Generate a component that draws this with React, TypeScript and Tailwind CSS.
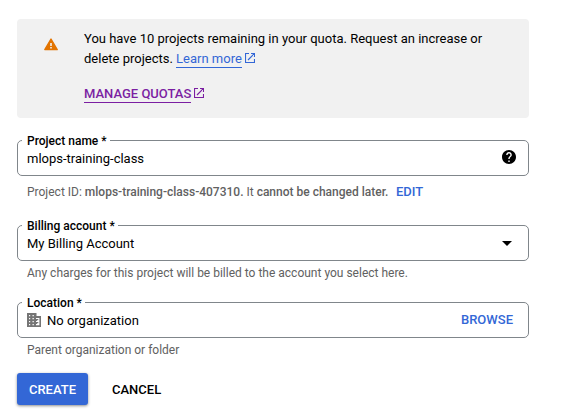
import type { ReactNode } from 'react';

function WarningIcon() {
  return (
    <svg viewBox="0 0 14 13" className="mt-[9px] h-[13px] w-[14px] shrink-0" aria-hidden="true">
      <path d="M7 1 13.2 11.6H.8z" fill="#e37400" stroke="#e37400" strokeWidth="1.4" strokeLinejoin="round" />
      <path d="M6.2 5h1.6v3H6.2zM6.2 9h1.6v1.4H6.2z" fill="#f1f1f1" />
    </svg>
  );
}

function HelpIcon() {
  return (
    <svg viewBox="2 2 20 20" className="mr-[12px] mb-[2px] ml-auto h-[14px] w-[14px] shrink-0" aria-hidden="true">
      <path d="M12 2C6.48 2 2 6.48 2 12s4.48 10 10 10 10-4.48 10-10S17.52 2 12 2zm1 17h-2v-2h2v2zm2.07-7.75l-.9.92C13.45 12.9 13 13.5 13 15h-2v-.5c0-1.1.45-2.1 1.17-2.83l1.24-1.26c.37-.36.59-.86.59-1.41 0-1.1-.9-2-2-2s-2 .9-2 2H8c0-2.21 1.79-4 4-4s4 1.79 4 4c0 .88-.36 1.68-.93 2.25z" />
    </svg>
  );
}

function OpenIcon() {
  return (
    <svg viewBox="0 0 10 10" fill="none" stroke="currentColor" strokeWidth="1.15" className="mb-px ml-[3px] h-[10px] w-[10px] shrink-0" aria-hidden="true">
      <path d="M4 .5H.5v9h9V6M6 .5h3.5V4M9.3.7 3 7" />
    </svg>
  );
}

function BuildingIcon() {
  return (
    <svg viewBox="0 0 14 14" fill="#757575" fillRule="evenodd" className="h-[14px] w-[14px] shrink-0" aria-hidden="true">
      <path d="M0 0h9.5v3H14v11H0zM2 2v1.2h1.2V2zM5.5 2v1.2h1.3V2zM2 5v1.2h1.2V5zM5.5 5v1.2h1.3V5zM2 8v1.2h1.2V8zM5.5 8v1.2h1.3V8zM2 11v1.2h1.2V11zM5.5 11v1.2h1.3V11zM9 5v1h1v2H9v1h1v2H9v1.2h3.4V5z" />
      <path d="M10 6h1.3v1.3H10zM10 9h1.3v1.3H10z" />
    </svg>
  );
}

function Field({ label, children }: { label: string; children: ReactNode }) {
  return (
    <fieldset className="h-[42px] min-w-0 rounded-[5px] border border-[#80868b] pl-1">
      <legend className="h-[13px] pr-[3px] pl-[5px] text-[12px] leading-[15px] font-medium text-black">{label}</legend>
      <div className="flex h-[22px] items-center pl-[5px] text-[13px] text-black">{children}</div>
    </fieldset>
  );
}

export default function App() {
  return (
    <main className="flex h-[418px] w-[567px] flex-col bg-white pt-[19px] pr-[38px] pl-[17px] font-['Roboto',sans-serif] text-[13px] text-black">
      <section className="flex h-[99px] shrink-0 rounded-[4px] bg-[#f1f1f1] pt-[10px] pl-[27px]">
        <WarningIcon />
        <div className="ml-[26px] w-[420px] leading-5">
          <p>
            You have 10 projects remaining in your quota. Request an increase or
            <br />
            delete projects.{' '}
            <a className="inline-flex h-[19px] items-center align-top text-[#3367d6]">
              <span className="h-[19px] border-b border-[#3367d6]">Learn more</span>
              <OpenIcon />
            </a>
          </p>
          <a className="mt-[15px] flex h-[19px] items-center font-medium text-[#7b1fa2]">
            <span className="h-[19px] border-b border-[#7b1fa2]">MANAGE QUOTAS</span>
            <OpenIcon />
          </a>
        </div>
      </section>

      <div className="mt-4">
        <Field label="Project name *">
          <span className="pt-[2px]">mlops-training-class</span>
          <HelpIcon />
        </Field>
      </div>
      <p className="mt-2 ml-[10px] h-4 text-[12px] leading-4 text-[#616161]">
        Project ID: <span className="font-medium">mlops-training-class-407310.</span> It{' '}
        <span className="font-medium">cannot be changed later.</span>
        <a className="ml-[7.5px] text-[13px] font-medium text-[#3367d6]">EDIT</a>
      </p>

      <div className="mt-[19px]">
        <Field label="Billing account *">
          <span className="pt-[2px]">My Billing Account</span>
          <svg viewBox="0 0 10 5" className="mr-[16px] ml-auto h-[5px] w-[10px]" aria-hidden="true">
            <path d="M0 0h10L5 5z" />
          </svg>
        </Field>
      </div>
      <p className="mt-1 ml-[10px] h-4 text-[12px] leading-4 text-[#616161]">
        Any charges for this project will be billed to the account you select here.
      </p>

      <div className="mt-[15px]">
        <Field label="Location *">
          <BuildingIcon />
          <span className="ml-[6px] pt-[2px]">No organization</span>
          <a className="mr-[15px] ml-auto font-medium text-[#3367d6]">BROWSE</a>
        </Field>
      </div>
      <p className="mt-1 ml-[10px] h-4 text-[12px] leading-4 text-[#616161]">Parent organization or folder</p>

      <div className="mt-[15px] flex items-center font-medium">
        <button className="h-8 w-[71px] rounded-[3px] bg-[#3367d6] pt-[2px] text-white shadow-[0_1px_3px_rgba(0,0,0,0.45)]">
          CREATE
        </button>
        <button className="ml-6 h-8 pt-[2px]">CANCEL</button>
      </div>
    </main>
  );
}
